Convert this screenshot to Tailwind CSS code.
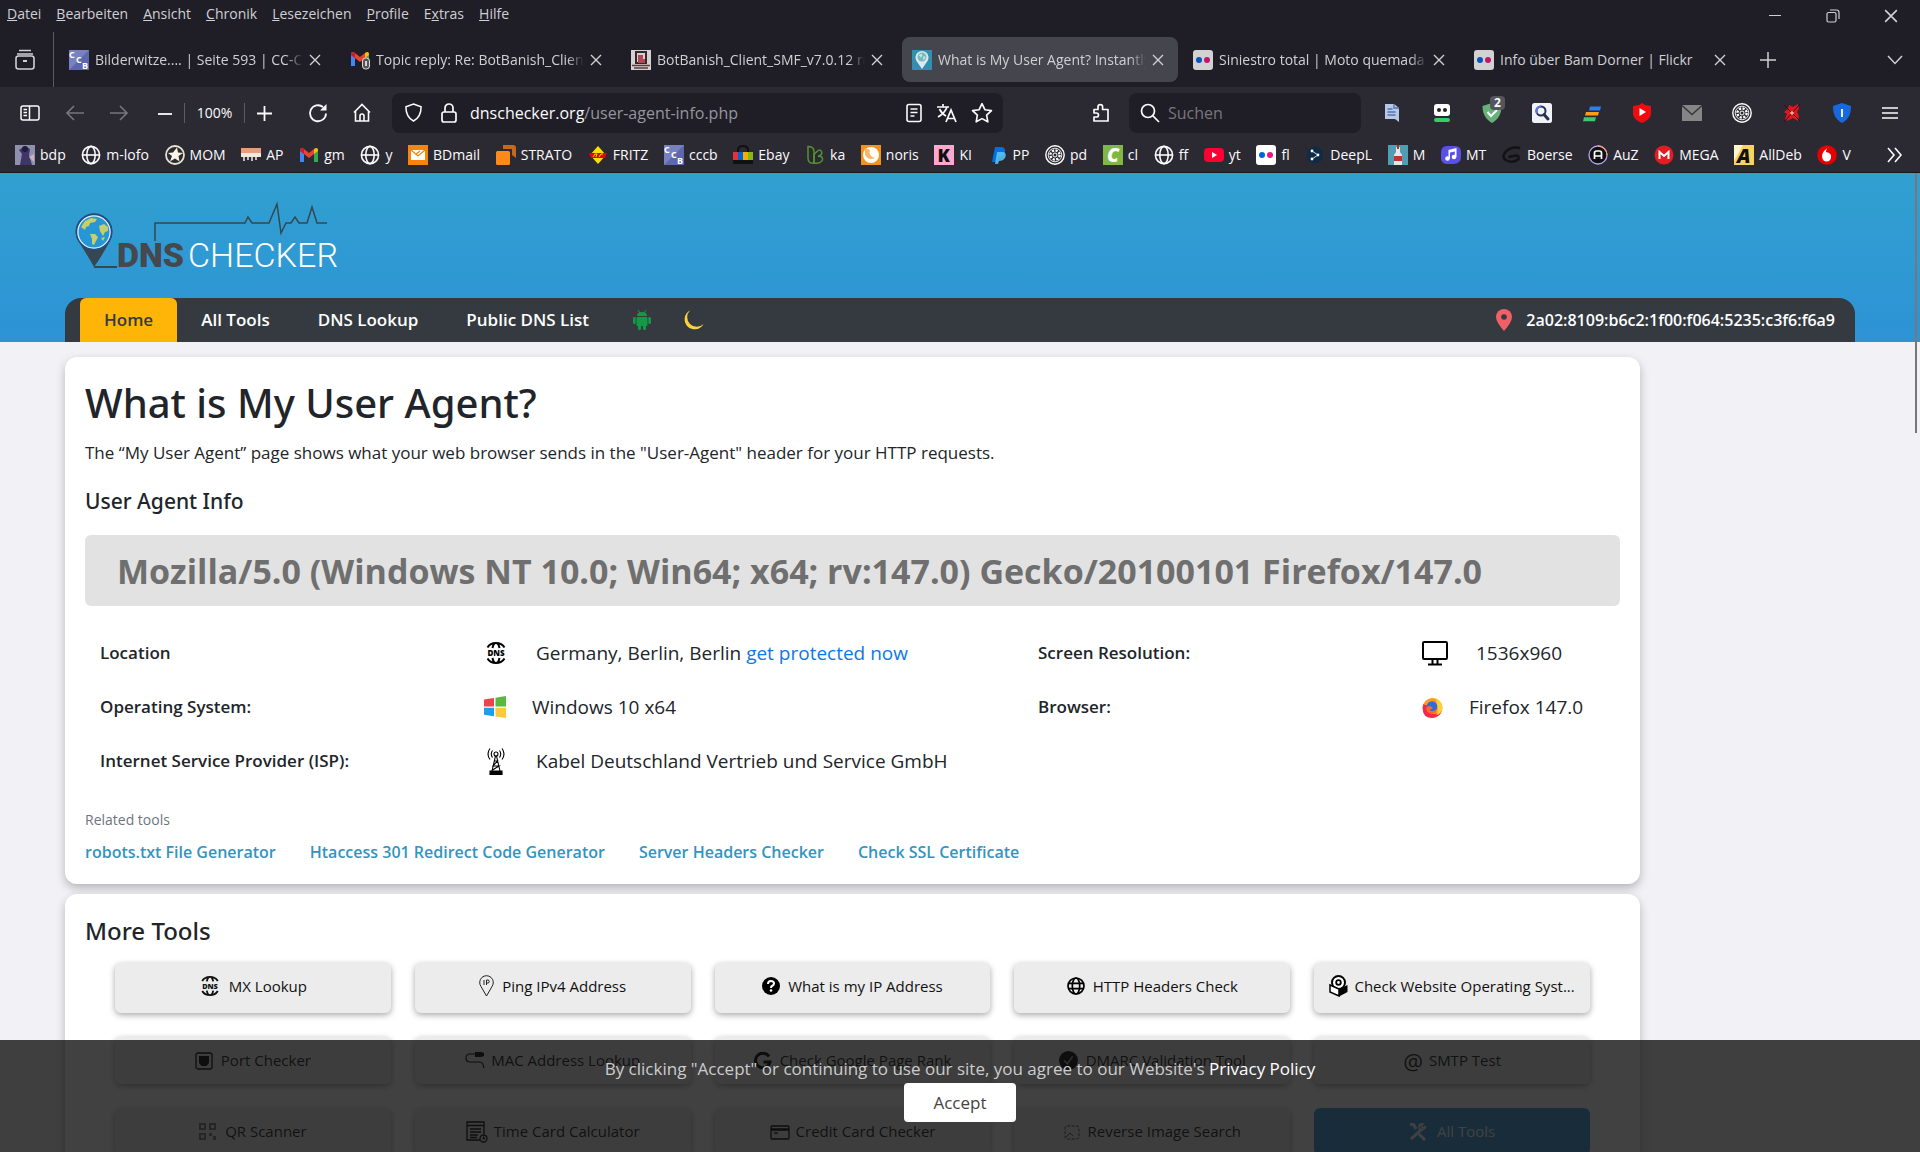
<!DOCTYPE html>
<html lang="de">
<head>
    <meta charset="UTF-8">
    <meta name="viewport" content="width=device-width, initial-scale=1.0">
    <title>What is My User Agent? Instantly Check Your Browser Info</title>
    <script src="https://cdn.jsdelivr.net/npm/@tailwindcss/browser@4"></script>
</head>
<body class="h-screen overflow-hidden flex flex-col bg-[#f2f2f6] font-['Open_Sans',sans-serif] text-[#212529]">

    <!-- shared icons -->
    <svg class="hidden" aria-hidden="true">
        <symbol id="close" viewBox="0 0 12 12"><path d="M1 1l10 10M11 1L1 11" stroke="currentColor" stroke-width="1.4" fill="none"/></symbol>
        <symbol id="globe" viewBox="0 0 20 20"><g fill="none" stroke="currentColor" stroke-width="1.6"><circle cx="10" cy="10" r="8.6"/><ellipse cx="10" cy="10" rx="4.2" ry="8.6"/><path d="M1.5 10h17"/></g></symbol>
        <symbol id="flickr" viewBox="0 0 20 20"><rect width="20" height="20" rx="3" fill="#fff"/><circle cx="6" cy="10" r="3" fill="#0063dc"/><circle cx="14" cy="10" r="3" fill="#e6177f"/></symbol>
        <symbol id="cccb" viewBox="0 0 20 20"><rect width="20" height="20" fill="#5d68ac"/><path d="M0 0h20L0 20z" fill="#8b95cf" opacity=".6"/><g fill="#fff" font-family="Open Sans, sans-serif" font-weight="700" font-size="9"><text x="0" y="8">C</text><text x="7" y="13">C</text><text x="13" y="19">B</text></g></symbol>
        <symbol id="gmail" viewBox="0 0 20 16"><path d="M1 2v13h4V7z" fill="#4285f4"/><path d="M19 2v13h-4V7z" fill="#34a853"/><path d="M1 2.500Q2 0 5 2l5 4 5-4-0 5-5 4-5-4-4-3z" fill="#ea4335"/><path d="M15 2q3-2 4 .5V4l-4 3z" fill="#fbbc04"/><path d="M1 2.500Q2 .5 5 2v5L1 4z" fill="#c5221f"/></symbol>
        <symbol id="wheel" viewBox="0 0 20 20"><g fill="none" stroke="#fff"><circle cx="10" cy="10" r="9.200" stroke-width="1.400"/><circle cx="10" cy="10" r="6.800" stroke-width=".9"/><circle cx="10" cy="10" r="4.600" stroke-width="2.400" stroke-dasharray="2.200 1.400"/><circle cx="10" cy="10" r="2" stroke-width="1"/></g></symbol>
        <symbol id="dns" viewBox="0 0 24 24"><g fill="none" stroke="currentColor" stroke-width="2"><path d="M3.500 6.500C7 .5 17 .5 20.500 6.500M8.500 7Q9.500 2 12 2T15.500 7M3.500 17.500c3.500 6 13.500 6 17 0M8.500 17q1 5 3.500 5T15.500 17"/></g><text x="12" y="14.800" text-anchor="middle" font-family="Open Sans, sans-serif" font-size="8" font-weight="800" fill="currentColor">DNS</text></symbol>
    </svg>

    <!-- menu bar -->
    <header class="bg-[#1f1e26] text-[#cfcfd4]">
        <div class="flex h-8 items-start justify-between pl-[7px] pr-[22px] text-sm">
            <nav class="flex gap-[15px] pt-1">
                <a href="#"><u>D</u>atei</a>
                <a href="#"><u>B</u>earbeiten</a>
                <a href="#"><u>A</u>nsicht</a>
                <a href="#"><u>C</u>hronik</a>
                <a href="#"><u>L</u>esezeichen</a>
                <a href="#"><u>P</u>rofile</a>
                <a href="#">E<u>x</u>tras</a>
                <a href="#"><u>H</u>ilfe</a>
            </nav>
            <div class="flex items-center gap-11 pt-[9px]">
                <button aria-label="Minimieren"><svg class="size-[14px]" viewBox="0 0 14 14"><path d="M1 6.500h12" stroke="currentColor"/></svg></button>
                <button aria-label="Wiederherstellen"><svg class="size-[14px]" viewBox="0 0 14 14" fill="none" stroke="currentColor" stroke-width="1.200"><rect x="1" y="3.500" width="9" height="9.500" rx="1.500"/><path d="M4 1h6.500Q13 1 13 3.500V10"/></svg></button>
                <button aria-label="Schließen"><svg class="size-[14px]"><use href="#close"/></svg></button>
            </div>
        </div>

        <!-- tabs -->
        <div class="flex h-[55px] items-center text-sm">
            <div class="flex h-full w-[54px] items-center border-r border-[#5a5a62] pl-[14px]">
                <button aria-label="Firefox View"><svg class="size-[22px]" viewBox="0 0 22 22" fill="none" stroke="currentColor" stroke-width="1.600"><path d="M5 1.500h12M3 5h16"/><rect x="2" y="7" width="18" height="13" rx="2.500"/><path d="M9 12h4" stroke-width="2"/></svg></button>
            </div>
            <div role="tablist" class="ml-[5px] flex flex-1 gap-[5px]">
                <div class="flex h-[45px] max-w-[276px] flex-1 items-center gap-[6px] pl-[10px] pr-[14px]">
                    <svg class="size-5 shrink-0"><use href="#cccb"/></svg>
                    <span class="flex-1 overflow-hidden whitespace-nowrap [mask-image:linear-gradient(to_right,black_92%,transparent)]">Bilderwitze.... | Seite 593 | CC-Community</span>
                    <button aria-label="Tab schließen"><svg class="size-3"><use href="#close"/></svg></button>
                </div>
                <div class="flex h-[45px] max-w-[276px] flex-1 items-center gap-[6px] pl-[10px] pr-[14px]">
                    <svg class="size-5 shrink-0" viewBox="0 0 20 20"><use href="#gmail" width="20" height="16" y="1"/><rect x="12.500" y="8" width="7" height="11" rx="3" fill="#555" stroke="#ddd"/><path d="M16 11v5" stroke="#fff" stroke-width="1.500"/></svg>
                    <span class="flex-1 overflow-hidden whitespace-nowrap [mask-image:linear-gradient(to_right,black_92%,transparent)]">Topic reply: Re: BotBanish_Client_SMF</span>
                    <button aria-label="Tab schließen"><svg class="size-3"><use href="#close"/></svg></button>
                </div>
                <div class="flex h-[45px] max-w-[276px] flex-1 items-center gap-[6px] pl-[10px] pr-[14px]">
                    <svg class="size-5 shrink-0" viewBox="0 0 20 20"><rect width="20" height="20" fill="#d5d1d0"/><rect x="5" y="2" width="10" height="11" fill="none" stroke="#352a2a" stroke-width="2"/><path d="M7 5h5v4h2v4H7z" fill="#b4475a"/><path d="M1 15.500h18M3 18h14" stroke="#5d3e3e" stroke-width="1.500"/></svg>
                    <span class="flex-1 overflow-hidden whitespace-nowrap [mask-image:linear-gradient(to_right,black_92%,transparent)]">BotBanish_Client_SMF_v7.0.12 released</span>
                    <button aria-label="Tab schließen"><svg class="size-3"><use href="#close"/></svg></button>
                </div>
                <div class="flex h-[45px] max-w-[276px] flex-1 items-center gap-[6px] rounded-lg bg-[#45464d] pl-[10px] pr-[14px]">
                    <svg class="size-5 shrink-0" viewBox="0 0 20 20"><rect width="20" height="20" fill="#328fb2"/><path d="M10 19L4.500 11a6.500 6.500 0 1 1 11 0z" fill="#dfe9ea"/><circle cx="10" cy="7" r="4.500" fill="#75b7cc"/><path d="M6.500 5l3-1.500 1 2-1.500 2zM11 7l2-1 .5 2-2 2.500z" fill="#cfe3c8"/></svg>
                    <span class="flex-1 overflow-hidden whitespace-nowrap [mask-image:linear-gradient(to_right,black_92%,transparent)]">What is My User Agent? Instantly</span>
                    <button aria-label="Tab schließen"><svg class="size-3"><use href="#close"/></svg></button>
                </div>
                <div class="flex h-[45px] max-w-[276px] flex-1 items-center gap-[6px] pl-[10px] pr-[14px]">
                    <svg class="size-5 shrink-0 opacity-80"><use href="#flickr"/></svg>
                    <span class="flex-1 overflow-hidden whitespace-nowrap [mask-image:linear-gradient(to_right,black_92%,transparent)]">Siniestro total | Moto quemada en</span>
                    <button aria-label="Tab schließen"><svg class="size-3"><use href="#close"/></svg></button>
                </div>
                <div class="flex h-[45px] max-w-[276px] flex-1 items-center gap-[6px] pl-[10px] pr-[14px]">
                    <svg class="size-5 shrink-0 opacity-80"><use href="#flickr"/></svg>
                    <span class="flex-1 overflow-hidden whitespace-nowrap">Info über Bam Dorner | Flickr</span>
                    <button aria-label="Tab schließen"><svg class="size-3"><use href="#close"/></svg></button>
                </div>
                <button class="ml-[15px]" aria-label="Neuer Tab"><svg class="size-4" viewBox="0 0 16 16"><path d="M8 0v16M0 8h16" stroke="currentColor" stroke-width="1.500"/></svg></button>
            </div>
            <button class="mr-[17px]" aria-label="Alle Tabs"><svg class="size-4" viewBox="0 0 16 16"><path d="M1 4l7 7.500L15 4" fill="none" stroke="currentColor" stroke-width="1.500"/></svg></button>
        </div>
    </header>

    <!-- toolbar -->
    <div class="flex h-[51px] items-center bg-[#2b2a32] pl-5 pr-[22px] text-sm text-[#fbfbfe]">
        <button aria-label="Seitenleiste"><svg class="size-5" viewBox="0 0 20 20" fill="none" stroke="currentColor" stroke-width="1.500"><rect x="1" y="3" width="18" height="14" rx="2"/><path d="M9.500 3v14M3.500 6.500h3.500M3.500 9.500h3.500M3.500 12.500h3.500"/></svg></button>
        <button class="ml-[25px] text-[#77767f]" aria-label="Zurück"><svg class="size-5" viewBox="0 0 20 20" fill="none" stroke="currentColor" stroke-width="1.600"><path d="M19 10H2M9 3l-7 7 7 7"/></svg></button>
        <button class="ml-6 text-[#77767f]" aria-label="Vor"><svg class="size-5" viewBox="0 0 20 20" fill="none" stroke="currentColor" stroke-width="1.600"><path d="M1 10h17M11 3l7 7-7 7"/></svg></button>
        <button class="ml-[25px]" aria-label="Verkleinern"><svg class="size-5" viewBox="0 0 20 20"><path d="M4 11h14" stroke="currentColor" stroke-width="1.800"/></svg></button>
        <button class="ml-[10px] h-5 w-[61px] border-x border-[#5b5b66]">100%</button>
        <button class="ml-[9px]" aria-label="Vergrößern"><svg class="size-5" viewBox="0 0 20 20"><path d="M3 10.500h15M10.500 3v15" stroke="currentColor" stroke-width="1.800"/></svg></button>
        <button class="ml-[34px]" aria-label="Neu laden"><svg class="size-5" viewBox="0 0 20 20" fill="none" stroke="currentColor" stroke-width="1.800"><path d="M18 10.500a8 8 0 1 1-3-6.500"/><path d="M18.500 1v6.500H12z" fill="currentColor" stroke="none"/></svg></button>
        <button class="ml-6" aria-label="Startseite"><svg class="size-5" viewBox="0 0 20 20" fill="none" stroke="currentColor" stroke-width="1.600"><path d="M2 9.500L10 1.500l8 8M3.500 8.500V18h13V8.500"/><path d="M8 18v-5a2 2 0 0 1 4 0v5"/></svg></button>

        <div class="ml-5 flex h-10 flex-1 items-center rounded-lg bg-[#1f1e26] pl-3 pr-[10px]">
            <svg class="size-[19px]" viewBox="0 0 20 20" fill="none" stroke="currentColor" stroke-width="1.600"><path d="M10 1l8 3c0 7-2 12-8 15C4 16 2 11 2 4z"/></svg>
            <svg class="ml-4 size-5" viewBox="0 0 20 20" fill="none" stroke="currentColor" stroke-width="1.700"><rect x="3" y="9" width="14" height="10" rx="2"/><path d="M6 9V5a4 4 0 0 1 8 0v4"/></svg>
            <div class="ml-[11px] flex-1 text-base" role="textbox" aria-label="Adresse">dnschecker.org<span class="text-[#96959e]">/user-agent-info.php</span></div>
            <button aria-label="Leseansicht"><svg class="size-5" viewBox="0 0 20 20" fill="none" stroke="currentColor" stroke-width="1.600"><rect x="3" y="1.500" width="14" height="17" rx="2"/><path d="M6.500 6h7M6.500 9.500h7M6.500 13h4"/></svg></button>
            <button class="ml-[13px]" aria-label="Übersetzen"><svg class="size-5" viewBox="0 0 20 20" fill="none" stroke="currentColor" stroke-width="1.700"><path d="M0 4h12M6 1v3M10 4Q8 10 1 14M2.500 6Q5 11 9 13M9 19l5-12 5 12M11 15.500h6"/></svg></button>
            <button class="ml-[14px]" aria-label="Lesezeichen hinzufügen"><svg class="size-[22px]" viewBox="0 0 20 20" fill="none" stroke="currentColor" stroke-width="1.500" stroke-linejoin="round"><path d="M10 1.500l2.600 5.500 6 .8-4.400 4.200 1.100 6L10 15.100 4.700 18l1.100-6L1.400 7.800l6-.8z"/></svg></button>
        </div>

        <button class="ml-[88px]" aria-label="Erweiterungen"><svg class="size-5" viewBox="0 0 20 20" fill="none" stroke="currentColor" stroke-width="1.700" stroke-linejoin="round"><path d="M3 6.500h4V4a2.300 2.300 0 0 1 4.600 0v2.500H17V18H3v-4h2.500a2 2 0 0 0 0-4H3z"/></svg></button>
        <label class="ml-[18px] flex h-10 w-58 items-center gap-2 rounded-lg bg-[#1f1e26] pl-[11px]">
            <svg class="size-5 shrink-0" viewBox="0 0 20 20" fill="none" stroke="currentColor" stroke-width="1.700"><circle cx="8" cy="8" r="6.500"/><path d="M12.700 12.700L19 19"/></svg>
            <input type="text" placeholder="Suchen" aria-label="Suchen" class="w-full bg-transparent text-base placeholder-[#77767f] outline-none">
        </label>

        <div class="ml-[21px] flex items-center gap-[30px]">
            <button aria-label="Notizen"><svg class="size-5" viewBox="0 0 20 20"><path d="M3 1h9l5 4v14l-4-3H3z" fill="#b6c8ea"/><path d="M12 1v4h5M5.500 6h5M5.500 9h8M5.500 12h8" fill="none" stroke="#5572ad" stroke-width="1.300"/></svg></button>
            <button aria-label="RoboForm"><svg class="size-5" viewBox="0 0 20 20"><rect x="2" y="1" width="16" height="12" rx="3" fill="#fff"/><circle cx="7" cy="7" r="2" fill="#222"/><circle cx="13" cy="7" r="2" fill="#222"/><rect x="2" y="15" width="16" height="4" rx="2" fill="#35cf66"/></svg></button>
            <button class="relative" aria-label="AdGuard"><svg class="size-5" viewBox="0 0 20 20"><path d="M10 0l9.500 3c0 8-3 13-9.500 17C3.500 16 .5 11 .5 3z" fill="#67b279"/><path d="M5.500 9l3.500 4 6-6" fill="none" stroke="#fff" stroke-width="2"/></svg><span class="absolute -top-[7px] left-2 rounded-sm bg-[#55555c] px-1 text-xs font-bold leading-[14px]">2</span></button>
            <button aria-label="Suche"><svg class="size-5" viewBox="0 0 20 20"><rect width="20" height="20" rx="2.500" fill="#f1f3fb"/><circle cx="9" cy="8" r="4.500" fill="none" stroke="#27304c" stroke-width="2"/><path d="M9 3.500A4.500 4.500 0 0 0 5 10.500" fill="none" stroke="#5b78e8" stroke-width="2.200"/><path d="M12 11.500l4 4.500" stroke="#27304c" stroke-width="3" stroke-linecap="round"/></svg></button>
            <button aria-label="Listen"><svg class="size-5" viewBox="0 0 20 20"><path d="M8 3.500h11l-1 4H7z" fill="#2d7ff0"/><path d="M4 9h13l-1 3.500H3z" fill="#ff9a1f"/><path d="M2 14.200h12l-1 4H1z" fill="#42c867"/></svg></button>
            <button aria-label="Video"><svg class="size-5" viewBox="0 0 20 20"><path d="M10 0l3 2 6 1v7c0 5-4 8-9 10-5-2-9-5-9-10V3l6-1z" fill="#f00b10"/><path d="M7.500 5v8l6.500-4z" fill="#fff"/></svg></button>
            <button aria-label="Mail"><svg class="size-5" viewBox="0 0 20 20"><rect y="2" width="20" height="16" fill="#858585"/><path d="M0 2.500l10 9 10-9" fill="none" stroke="#36363c" stroke-width="1.500"/></svg></button>
            <button aria-label="Filmrolle"><svg class="size-5"><use href="#wheel"/></svg></button>
            <button aria-label="Blocker"><svg class="size-5" viewBox="0 0 20 20"><path d="M16 1l1 4-2 4 2 4-1 5-5-3-6 3-2-2 2-5-3-2 4-3 1-4 4 2z" fill="#e4151c"/><path d="M2 2l16 16M18 1L2 19" stroke="#3a0c0c" stroke-width="1"/><circle cx="10" cy="10" r="1.800" fill="#e6b3a0"/></svg></button>
            <button aria-label="Schutz"><svg class="size-5" viewBox="0 0 20 20"><path d="M10 0l9 3c0 8-2 13-9 17C3 16 1 11 1 3z" fill="#1769e0"/><path d="M10 6v8" stroke="#fff" stroke-width="1.800"/></svg></button>
            <button aria-label="Menü"><svg class="size-4" viewBox="0 0 16 16"><path d="M0 3h16M0 8h16M0 13h16" stroke="currentColor" stroke-width="1.500"/></svg></button>
        </div>
    </div>

    <!-- bookmarks -->
    <div class="flex h-[35px] items-center border-b border-[#17161c] bg-[#2b2a32] pl-[15px] pr-[17px] text-sm text-[#fbfbfe]">
        <nav class="flex flex-1 items-center justify-between">
            <a href="#" class="flex items-center gap-[5px]"><svg class="size-5" viewBox="0 0 20 20"><rect width="20" height="20" fill="#8f8faf"/><path d="M5 20L7 9 4 5l6-4 5 3-1 6 3 10z" fill="#3f3566"/><circle cx="10" cy="4" r="3" fill="#221c38"/><path d="M14 12l5-3v8z" fill="#c9b5bd"/></svg>bdp</a>
            <a href="#" class="flex items-center gap-[5px]"><svg class="size-5"><use href="#globe"/></svg>m-lofo</a>
            <a href="#" class="flex items-center gap-[5px]"><svg class="size-5" viewBox="0 0 20 20"><circle cx="10" cy="10" r="9" fill="#2b2a32" stroke="#e6e4cf" stroke-width="1.800"/><path d="M12 2.500l1 5 5 .5-4.500 3 1 5.500-4.500-3-5 3 2-5.500L3 8l5-.5z" fill="#f5f4e6"/></svg>MOM</a>
            <a href="#" class="flex items-center gap-[5px]"><svg class="size-5" viewBox="0 0 20 20"><rect y="3" width="20" height="5" fill="#e59d80"/><rect y="8" width="20" height="4" fill="#f3e9d8"/><path d="M3 12v4M7 12v3M11 12v4M15 12v3" stroke="#eee" stroke-width="1.500"/></svg>AP</a>
            <a href="#" class="flex items-center gap-[5px]"><svg class="h-4 w-5"><use href="#gmail"/></svg>gm</a>
            <a href="#" class="flex items-center gap-[5px]"><svg class="size-5"><use href="#globe"/></svg>y</a>
            <a href="#" class="flex items-center gap-[5px]"><svg class="size-5" viewBox="0 0 20 20"><rect width="20" height="20" fill="#f5860c"/><rect x="3" y="5" width="14" height="10" fill="#fff"/><path d="M3 5l7 6 7-6M8 9l4-3" fill="none" stroke="#f5860c" stroke-width="1.300"/></svg>BDmail</a>
            <a href="#" class="flex items-center gap-[5px]"><svg class="size-5" viewBox="0 0 20 20"><path d="M7 0h10q3 0 3 3v10l-4-3V4H7z" fill="#c7691a"/><rect y="6" width="14" height="14" rx="1.500" fill="#ff8a1c"/></svg>STRATO</a>
            <a href="#" class="flex items-center gap-[5px]"><svg class="size-5" viewBox="0 0 20 20"><path d="M10 1l8 9-8 9-8-9z" fill="#ffdf00"/><path d="M1 8h18l-2 5H3z" fill="#e2001a"/><path d="M5 12l2-3h2l-1 3M11 12l2-3h2" fill="none" stroke="#ffdf00"/></svg>FRITZ</a>
            <a href="#" class="flex items-center gap-[5px]"><svg class="size-5"><use href="#cccb"/></svg>cccb</a>
            <a href="#" class="flex items-center gap-[5px]"><svg class="size-5" viewBox="0 0 20 20"><path d="M5 7V5q0-4 5-4t5 4v2" fill="none" stroke="#111" stroke-width="2"/><path d="M0 7h5v9H0z" fill="#e53238"/><path d="M5 7h5v9H5z" fill="#0064d2"/><path d="M10 7h5v9h-5z" fill="#f5af02"/><path d="M15 7h5v9h-5z" fill="#86b817"/><rect y="15" width="20" height="4" fill="#111"/></svg>Ebay</a>
            <a href="#" class="flex items-center gap-[5px]"><svg class="size-5" viewBox="0 0 20 20" fill="none" stroke="#54922e" stroke-width="1.500"><path d="M3 1.500q6 0 6 5V18Q3 19 3 13z"/><path d="M9 9.500l3-3q3-3 4.500 0t-3.500 5q5-1 4.500 3.500-2 4-8.500 3z"/></svg>ka</a>
            <a href="#" class="flex items-center gap-[5px]"><svg class="size-5" viewBox="0 0 20 20"><rect width="20" height="20" fill="#f3931e"/><circle cx="10" cy="10" r="8" fill="#fff"/><path d="M4 3l5 2q-2 6 5 8-8 3-10-4z" fill="#f8b766"/></svg>noris</a>
            <a href="#" class="flex items-center gap-[5px]"><svg class="size-5" viewBox="0 0 20 20"><rect width="20" height="20" fill="#ffa8cd"/><text x="3.500" y="16.500" font-size="18" font-weight="800" fill="#111">K</text></svg>KI</a>
            <a href="#" class="flex items-center gap-[5px]"><svg class="size-5" viewBox="0 0 20 20"><path d="M7 2h7q4 1 3 5-1 5-7 5l-1 5H4z" fill="#0070e0"/><path d="M9 7h7q3 2 1 6-2 3-6 3l-1 3H7z" fill="#5ac8fa" opacity=".85"/></svg>PP</a>
            <a href="#" class="flex items-center gap-[5px]"><svg class="size-5"><use href="#wheel"/></svg>pd</a>
            <a href="#" class="flex items-center gap-[5px]"><svg class="size-5" viewBox="0 0 20 20"><rect width="20" height="20" fill="#7fb842"/><text x="4" y="17" font-size="19" font-style="italic" font-weight="800" fill="#fff">C</text></svg>cl</a>
            <a href="#" class="flex items-center gap-[5px]"><svg class="size-5"><use href="#globe"/></svg>ff</a>
            <a href="#" class="flex items-center gap-[5px]"><svg class="size-5" viewBox="0 0 20 20"><rect y="3" width="20" height="14" rx="4" fill="#ff0033"/><path d="M8 7v6l5-3z" fill="#fff"/></svg>yt</a>
            <a href="#" class="flex items-center gap-[5px]"><svg class="size-5"><use href="#flickr"/></svg>fl</a>
            <a href="#" class="flex items-center gap-[5px]"><svg class="size-5" viewBox="0 0 20 20"><path d="M10 1l8 4.500v9L10 19l-8-4.500v-9z" fill="#0f2b46"/><path d="M7 6l6 4-6 4" fill="none" stroke="#cfe0ee" stroke-width="1"/><circle cx="7" cy="6" r="1.400" fill="#fff"/><circle cx="13" cy="10" r="1.400" fill="#fff"/><circle cx="7" cy="14" r="1.400" fill="#fff"/></svg>DeepL</a>
            <a href="#" class="flex items-center gap-[5px]"><svg class="size-5" viewBox="0 0 20 20"><rect width="20" height="20" fill="#4f9fb4"/><path d="M8 2h4v5l2 3v10H6V10l2-3z" fill="#e6e6e6"/><path d="M6 11h8v5H6z" fill="#c2332f"/><path d="M9 0h2v4H9z" fill="#b52b2b"/></svg>M</a>
            <a href="#" class="flex items-center gap-[5px]"><svg class="size-5" viewBox="0 0 20 20"><path d="M6 1h8q6 0 6 6v5q0 7-8 7H5q-5-1-5-6V8q0-7 6-7z" fill="#5b50e6"/><g fill="#fff"><circle cx="6.500" cy="13.500" r="2.300"/><circle cx="13" cy="12" r="2.300"/><path d="M7.500 5l8-2v9h-1.700V6.500L9 7.500v6H7.500z"/></g></svg>MT</a>
            <a href="#" class="flex items-center gap-[5px]"><svg class="size-5" viewBox="0 0 20 20" fill="none" stroke="#121216" stroke-width="2.500"><path d="M18 3Q9 1 3.500 7q-4 5 0 8 8 4 13-1 1-5-5-3l-5 1"/></svg>Boerse</a>
            <a href="#" class="flex items-center gap-[5px]"><svg class="size-5" viewBox="0 0 20 20"><circle cx="10" cy="10" r="9" fill="#111" stroke="#b7a3f5" stroke-width="1.300"/><path d="M10 1a9 9 0 0 1 9 9" fill="none" stroke="#ff9b7a" stroke-width="1.300"/><path d="M6.500 14V8q0-2 2-2h3q2 0 2 2v6M6.500 11h7" fill="none" stroke="#fff" stroke-width="1.700"/></svg>AuZ</a>
            <a href="#" class="flex items-center gap-[5px]"><svg class="size-5" viewBox="0 0 20 20"><circle cx="10" cy="10" r="9.500" fill="#e31b23"/><path d="M5.500 14V7l4.500 4 4.500-4v7" fill="none" stroke="#fff" stroke-width="2"/></svg>MEGA</a>
            <a href="#" class="flex items-center gap-[5px]"><svg class="size-5" viewBox="0 0 20 20"><rect width="20" height="20" fill="#f9d35f"/><path d="M0 0h9L0 16z" fill="#fff6cf"/><text x="3" y="17.500" font-size="20" font-style="italic" font-weight="800" fill="#111">A</text></svg>AllDeb</a>
            <a href="#" class="flex items-center gap-[5px]"><svg class="size-5" viewBox="0 0 20 20"><circle cx="10" cy="10" r="9.800" fill="#e60000"/><path d="M13 2Q9 3 9 7q6 1 5 6-1 3.500-4.500 3.500T5 12q0-7 8-10z" fill="#fff"/></svg>V</a>
        </nav>
        <button class="ml-[36px]" aria-label="Weitere Lesezeichen"><svg class="size-4" viewBox="0 0 16 16" fill="none" stroke="currentColor" stroke-width="1.600"><path d="M1 1l6 7-6 7M8 1l6 7-6 7"/></svg></button>
    </div>

    <!-- page -->
    <div class="relative flex-1 overflow-hidden">
        <div class="bg-linear-to-b from-[#31a0d0] to-[#2d93d5] px-[65px]">
            <div class="h-[125px] pl-[9px] pt-[28px]">
                <svg class="h-[70px] w-[270px]" viewBox="0 0 270 70" role="img" aria-label="DNS Checker">
                    <path d="M20 66Q14 55 3 38a18.500 18.500 0 1 1 34 0Q28 55 20 66z" fill="#354750"/>
                    <circle cx="20" cy="31" r="17.500" fill="#e9f3f5" stroke="#1d4e8c" stroke-width="1.500"/>
                    <circle cx="20" cy="31" r="15.500" fill="#2596d6"/>
                    <path d="M7 26l4-6 6-3 6 1-2 3-5 1-1 3-3 1-1 3zM16 33l5 0 3 3-4 8-2-1 0-5zM25 25l5-2 4 3 0 4-3 1-2 4-3-5zM27 37l4-1-2 4z" fill="#c6cf68"/>
                    <path d="M20 66h23" stroke="#354750" stroke-width="2"/>
                    <path d="M81 40V22h90l3-6 4 6h17l8-19 4 29 5-10h5l4-6 4 6h8l5-16 5 16h10" fill="none" stroke="#354750" stroke-width="1.500"/>
                    <text x="43" y="66" font-family="Roboto, sans-serif" font-size="34" font-weight="900" fill="#45484d">DNS</text>
                    <text x="114" y="66" font-family="Roboto, sans-serif" font-size="34" font-weight="300" fill="#fff">CHECKER</text>
                </svg>
            </div>
            <nav class="flex h-11 items-center rounded-t-2xl bg-[#343a40] pl-[15px] pr-5 text-[17px] font-semibold text-white">
                <a href="#" class="flex h-full items-center rounded-t-md bg-[#ffb508] px-6 text-[#343a40]">Home</a>
                <a href="#" class="px-6">All Tools</a>
                <a href="#" class="px-6">DNS Lookup</a>
                <a href="#" class="px-6">Public DNS List</a>
                <a href="#" class="ml-[19px]" aria-label="Android App"><svg class="size-5" viewBox="0 0 20 20" fill="#149a45"><path d="M5 6q0-4 5-4t5 4z"/><path d="M6 0l2 3M14 0l-2 3" stroke="#149a45"/><rect x="4.500" y="7" width="11" height="9" rx="1"/><rect x="1" y="7" width="2.700" height="7" rx="1.300"/><rect x="16.300" y="7" width="2.700" height="7" rx="1.300"/><rect x="6" y="14" width="3" height="6" rx="1.300"/><rect x="11" y="14" width="3" height="6" rx="1.300"/></svg></a>
                <button class="ml-8" aria-label="Dark mode"><svg class="size-5" viewBox="0 0 20 20"><path d="M6 .5A10 10 0 1 0 19.500 14 9.500 9.500 0 0 1 6 .5z" fill="#fdd13c"/></svg></button>
                <span class="ml-auto flex items-center gap-[14px]"><svg class="h-[22px] w-4" viewBox="0 0 16 22"><path d="M8 22Q0 13 0 8a8 8 0 1 1 16 0q0 5-8 14z" fill="#f15f67"/><circle cx="8" cy="8" r="2.800" fill="#343a40"/></svg><span class="text-base">2a02:8109:b6c2:1f00:f064:5235:c3f6:f6a9</span></span>
            </nav>
        </div>

        <main class="mt-[15px] ml-[65px] max-w-[1575px]">
            <section class="rounded-xl bg-white px-5 pt-[22px] pb-5 shadow-[0_4px_10px_rgba(0,0,0,0.25)]">
                <h1 class="font-['Noto_Sans',sans-serif] text-[40px] leading-[48px] font-medium">What is My User Agent?</h1>
                <p class="mt-[14px] text-[17px] leading-6">The “My User Agent” page shows what your web browser sends in the "User-Agent" header for your HTTP requests.</p>
                <h2 class="mt-[22px] font-['Noto_Sans',sans-serif] text-[21px] leading-7 font-medium">User Agent Info</h2>
                <div class="mt-5 rounded-md bg-[#e2e2e2] pt-[2px] pl-8 text-[34px] leading-[69px] font-bold whitespace-nowrap text-[#6f6f6f]">Mozilla/5.0 (Windows NT 10.0; Win64; x64; rv:147.0) Gecko/20100101 Firefox/147.0</div>
                <dl class="mt-[19px] grid grid-cols-[384fr_554fr_384fr_213fr] items-center leading-[54px]">
                    <dt class="px-[15px] text-[17px] font-semibold">Location</dt>
                    <dd class="flex items-center gap-7 px-[15px] pt-px text-[19px] whitespace-nowrap"><svg class="size-6 text-black"><use href="#dns"/></svg><span>Germany, Berlin, Berlin <a href="#" class="text-[#0d78e8]">get protected now</a></span></dd>
                    <dt class="px-[15px] text-[17px] font-semibold">Screen Resolution:</dt>
                    <dd class="flex items-center gap-7 px-[15px] pt-px text-[19px] whitespace-nowrap"><svg class="size-[26px]" viewBox="0 0 26 26" fill="none" stroke="#000" stroke-width="2"><rect x="1" y="2" width="24" height="17" rx="1"/><path d="M10.500 19v5M15.500 19v5M6 24.500h14"/></svg>1536x960</dd>
                    <dt class="px-[15px] text-[17px] font-semibold">Operating System:</dt>
                    <dd class="flex items-center gap-[26px] px-[15px] text-[19px] whitespace-nowrap"><svg class="size-[22px]" viewBox="0 0 22 22"><path d="M0 3.500l10-1.500v8.500H0z" fill="#f1404b"/><path d="M11.500 1.800L22 0v10.500H11.500z" fill="#5bb83f"/><path d="M0 11.800h10v8.400L0 18.800z" fill="#18a0ec"/><path d="M11.500 11.800H22V22l-10.500-1.500z" fill="#fbc93b"/></svg>Windows 10 x64</dd>
                    <dt class="px-[15px] text-[17px] font-semibold">Browser:</dt>
                    <dd class="flex items-center gap-[26px] px-[15px] text-[19px] whitespace-nowrap"><svg class="size-[21px]" viewBox="0 0 20 20"><circle cx="10" cy="10.500" r="9.500" fill="#ff9a1a"/><path d="M1 7Q-1 20 10 20q8-1 9-8-4 5-9 4-6-2-5-8z" fill="#f5284c"/><path d="M13 1q7 3 6.500 11-2 5-6 5 3-4 1-9z" fill="#ffcf3a"/><circle cx="9.500" cy="9" r="5" fill="#2d6cdf"/><path d="M4 10q3-3 6 0 0 2-3 2 2 3 7 0-1 5-6 4-4-1-4-6z" fill="#ff6a2b"/></svg>Firefox 147.0</dd>
                    <dt class="px-[15px] text-[17px] font-semibold">Internet Service Provider (ISP):</dt>
                    <dd class="flex items-center gap-7 px-[15px] text-[19px] whitespace-nowrap"><svg class="h-7 w-6" viewBox="0 0 24 28" fill="none" stroke="#000" stroke-width="1.100"><circle cx="12" cy="7" r="2"/><path d="M8.500 3.500q-2.500 3.500 0 7M15.500 3.500q2.500 3.500 0 7M6 1.500q-4 5.500 0 11M18 1.500q4 5.500 0 11M11.500 9L8 24M12.500 9L16 24M10.500 14h3l-4.500 5h6l-6.500 4"/><path d="M6 24h12v3.500H6z" fill="#000"/></svg>Kabel Deutschland Vertrieb und Service GmbH</dd>
                </dl>
                <p class="mt-[22px] text-sm leading-5 text-[#6c757d]">Related tools</p>
                <div class="mt-[10px] flex gap-[34px] text-base leading-6 font-semibold text-[#3394c0]">
                    <a href="#">robots.txt File Generator</a>
                    <a href="#">Htaccess 301 Redirect Code Generator</a>
                    <a href="#">Server Headers Checker</a>
                    <a href="#">Check SSL Certificate</a>
                </div>
            </section>

            <section class="mt-[10px] rounded-xl bg-white px-5 pt-[21px] pb-5 shadow-[0_4px_10px_rgba(0,0,0,0.25)]">
                <h2 class="font-['Noto_Sans',sans-serif] text-2xl leading-8 font-medium">More Tools</h2>
                <div class="mt-4 grid grid-cols-5 gap-x-6 gap-y-6 px-[30px] text-[15px] whitespace-nowrap text-[#111]">
                    <a href="#" class="flex h-[50px] items-center justify-center gap-2 rounded-md bg-[#ececec] px-2 pb-1 shadow-[0_2px_6px_rgba(0,0,0,0.35)]"><svg class="size-[22px]"><use href="#dns"/></svg>MX Lookup</a>
                    <a href="#" class="flex h-[50px] items-center justify-center gap-2 rounded-md bg-[#ececec] px-2 pb-1 shadow-[0_2px_6px_rgba(0,0,0,0.35)]"><svg class="h-[22px] w-[15px]" viewBox="0 0 15 22" fill="none" stroke="#222" stroke-width="1"><path d="M7.500 21L2 11.500a6.800 6.800 0 1 1 11 0z"/><path d="M5 5v5M7.500 10V5h2q1.500 1.500 0 3h-2"/></svg>Ping IPv4 Address</a>
                    <a href="#" class="flex h-[50px] items-center justify-center gap-2 rounded-md bg-[#ececec] px-2 pb-1 shadow-[0_2px_6px_rgba(0,0,0,0.35)]"><svg class="size-[18px]" viewBox="0 0 18 18"><circle cx="9" cy="9" r="9"/><path d="M6 7q0-3 3-3t3 2.500Q12 8 10 9q-1 .5-1 2" fill="none" stroke="#fff" stroke-width="2"/><circle cx="9" cy="13.500" r="1.300" fill="#fff"/></svg>What is my IP Address</a>
                    <a href="#" class="flex h-[50px] items-center justify-center gap-2 rounded-md bg-[#ececec] px-2 pb-1 shadow-[0_2px_6px_rgba(0,0,0,0.35)]"><svg class="size-[18px]" viewBox="0 0 18 18" fill="none" stroke="#000" stroke-width="1.700"><circle cx="9" cy="9" r="8"/><ellipse cx="9" cy="9" rx="3.700" ry="8"/><path d="M1.500 6.300h15M1.500 11.700h15"/></svg>HTTP Headers Check</a>
                    <a href="#" class="flex h-[50px] items-center justify-center gap-[6px] rounded-md bg-[#ececec] px-2 pb-1 shadow-[0_2px_6px_rgba(0,0,0,0.35)]"><svg class="h-[22px] w-[19px]" viewBox="0 0 19 22"><circle cx="9.500" cy="7.500" r="6.500" fill="#fff" stroke="#000" stroke-width="2"/><circle cx="9.500" cy="7.500" r="2.300" fill="none" stroke="#000" stroke-width="1.800"/><path d="M1 10l9 4v7l-9-4z" fill="#fff" stroke="#000" stroke-width="1.500"/><path d="M10 14l8.500-4v7L10 21.500z"/></svg>Check Website Operating Syst...</a>

                    <a href="#" class="flex h-[47px] items-center justify-center gap-2 rounded-md bg-[#ececec] px-2 shadow-[0_2px_6px_rgba(0,0,0,0.35)]"><svg class="size-[18px]" viewBox="0 0 18 18"><rect x="1" y="1" width="16" height="16" rx="2" fill="none" stroke="#000" stroke-width="1.300"/><path d="M4 4h10v7l-2.500 3h-5L4 11z"/></svg>Port Checker</a>
                    <a href="#" class="flex h-[47px] items-center justify-center gap-[6px] rounded-md bg-[#ececec] px-2 shadow-[0_2px_6px_rgba(0,0,0,0.35)]"><svg class="size-5" viewBox="0 0 20 20"><path d="M12 3H5Q1 3 1 7t4 4h10q3 0 4 6" fill="none" stroke="#000" stroke-width="1.200"/><path d="M10 1h6l3 1v3l-3 1h-6z"/></svg>MAC Address Lookup</a>
                    <a href="#" class="flex h-[47px] items-center justify-center gap-2 rounded-md bg-[#ececec] px-2 shadow-[0_2px_6px_rgba(0,0,0,0.35)]"><svg class="size-[18px]" viewBox="0 0 18 18"><path d="M15 4.500A7.300 7.300 0 1 0 16 10H9.500" fill="none" stroke="#000" stroke-width="3"/></svg>Check Google Page Rank</a>
                    <a href="#" class="flex h-[47px] items-center justify-center gap-2 rounded-md bg-[#ececec] px-2 shadow-[0_2px_6px_rgba(0,0,0,0.35)]"><svg class="size-[19px]" viewBox="0 0 18 18"><circle cx="9" cy="9" r="9"/><path d="M5 9l3 3 5-7" fill="none" stroke="#999" stroke-width="1.500"/></svg>DMARC Validation Tool</a>
                    <a href="#" class="flex h-[47px] items-center justify-center gap-[6px] rounded-md bg-[#ececec] px-2 shadow-[0_2px_6px_rgba(0,0,0,0.35)]"><span class="text-[22px] leading-5">@</span>SMTP Test</a>

                    <a href="#" class="flex h-[47px] items-center justify-center gap-2 rounded-md bg-[#ececec] px-2 shadow-[0_2px_6px_rgba(0,0,0,0.35)]"><svg class="size-[18px]" viewBox="0 0 18 18" fill="#777"><path d="M0 0h7v7H0zM2 2v3h3V2zM10 0h7v7h-7zM12 2v3h3V2zM0 10h7v7H0zM2 12v3h3v-3z" fill-rule="evenodd"/><path d="M10 10h3v3h-3zM14 13h3v4h-3z"/></svg>QR Scanner</a>
                    <a href="#" class="flex h-[47px] items-center justify-center gap-[6px] rounded-md bg-[#ececec] px-2 shadow-[0_2px_6px_rgba(0,0,0,0.35)]"><svg class="size-[22px]" viewBox="0 0 22 22" fill="none" stroke="#000" stroke-width="1.300"><path d="M14 19H1V1h17v12M1 4.500h17M4 8h11M4 11h11M4 14h8M4 16.500h7"/><circle cx="17.500" cy="17.500" r="3.500"/><path d="M17.500 15.500v2h1.500"/></svg>Time Card Calculator</a>
                    <a href="#" class="flex h-[47px] items-center justify-center gap-[6px] rounded-md bg-[#ececec] px-2 shadow-[0_2px_6px_rgba(0,0,0,0.35)]"><svg class="size-5" viewBox="0 0 20 20" fill="none" stroke="#000" stroke-width="1.300"><rect x="1" y="4" width="18" height="13" rx="1"/><path d="M1 7.500h18" stroke-width="2.500"/><path d="M4 11h4"/></svg>Credit Card Checker</a>
                    <a href="#" class="flex h-[47px] items-center justify-center gap-2 rounded-md bg-[#ececec] px-2 shadow-[0_2px_6px_rgba(0,0,0,0.35)]"><svg class="size-4" viewBox="0 0 16 16" fill="none" stroke="#444"><rect x="1" y="2" width="14" height="13" rx="2" stroke-dasharray="3 1.500"/><path d="M2 13l4-4 3 3"/></svg>Reverse Image Search</a>
                    <a href="#" class="flex h-[47px] items-center justify-center gap-[10px] rounded-md bg-[#3498db] px-2 text-white"><svg class="size-[18px]" viewBox="0 0 18 18" fill="none" stroke="#fff"><path d="M2 16L13 6" stroke-width="3"/><path d="M17 3l-3 2-2-2 2-2q-4-1-4 3t3 3 4-4" stroke-width="1.500"/><path d="M1 1l4 1 2 4M10 11l6 6" stroke-width="3"/></svg>All Tools</a>
                </div>
            </section>
        </main>

        <!-- page scrollbar -->
        <div class="absolute top-0 right-[3px] h-[260px] w-[2px] bg-[#77787d]"></div>

        <!-- cookie notice -->
        <div class="absolute inset-x-0 bottom-0 flex h-28 flex-col items-center bg-[#121212]/80 pt-[17px] text-[17px] text-[#cccccc]">
            <p class="leading-6">By clicking "Accept" or continuing to use our site, you agree to our Website's <a href="#" class="text-white">Privacy Policy</a></p>
            <button class="mt-[2px] h-[39px] w-28 rounded-sm bg-white text-[#444]">Accept</button>
        </div>
    </div>
</body>
</html>
